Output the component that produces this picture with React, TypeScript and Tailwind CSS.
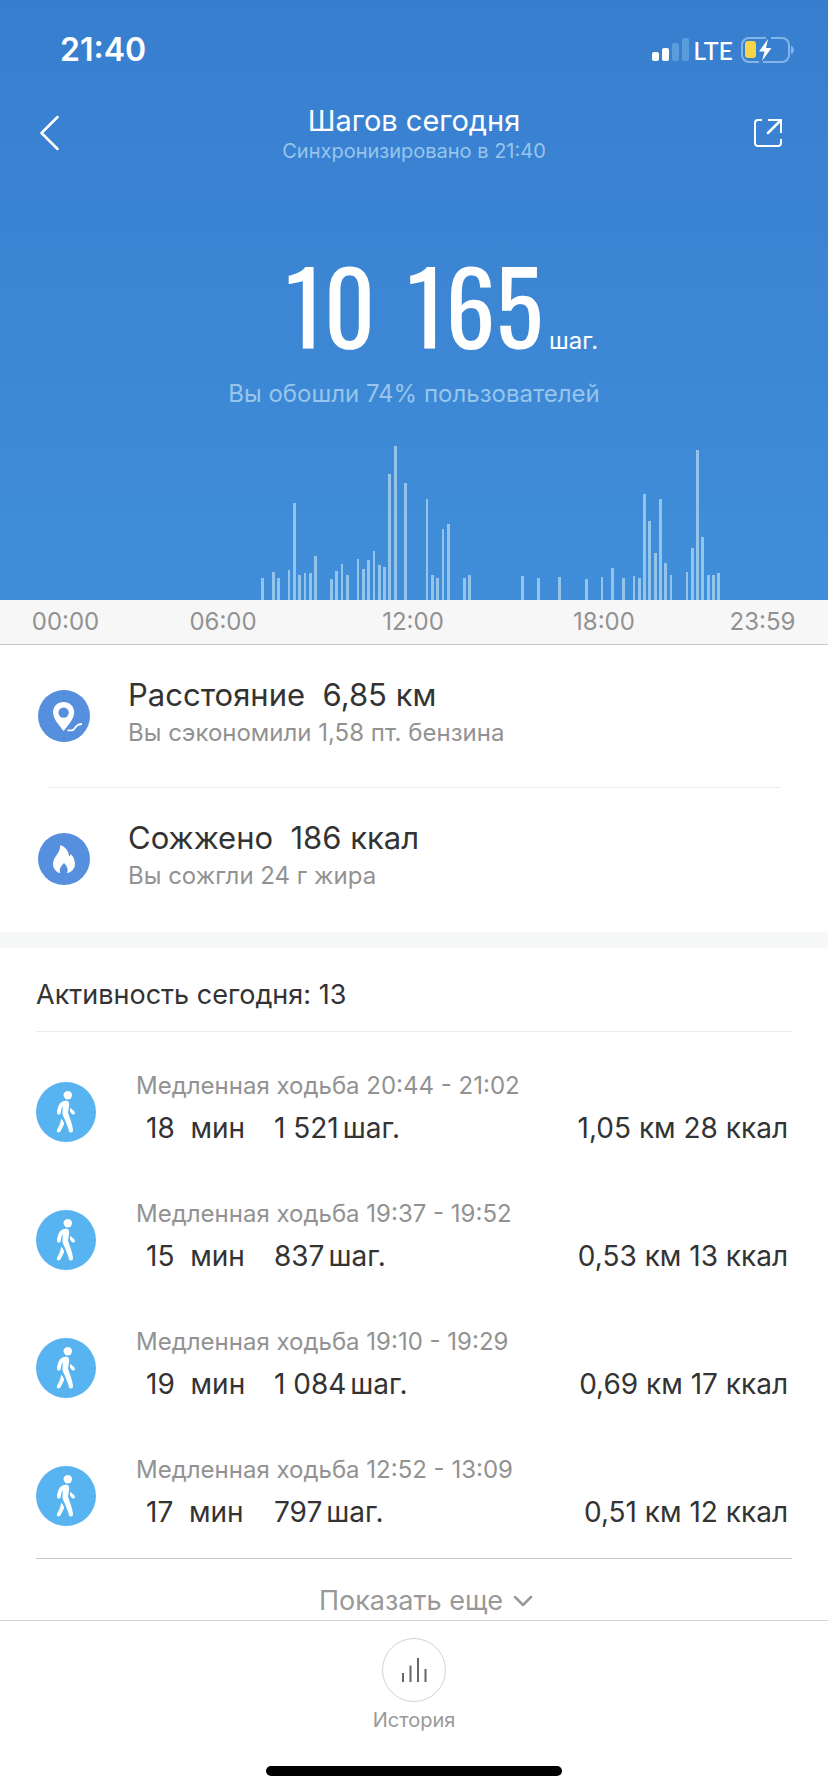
import type { ReactNode } from "react";

type Bar = [x: number, width: number, height: number];

type Activity = {
  time: string;
  minutes: number;
  steps: string;
  distance: string;
  calories: number;
};

const CHART_HEIGHT = 154;

const bars: Bar[] = [
  [261, 3, 22], [272, 3, 28], [277, 3, 22], [288, 2, 30], [293, 3, 97], [298, 3, 25],
  [304, 2, 27], [309, 3, 27], [314, 3, 44], [330, 3, 21], [335, 3, 29], [341, 2, 36],
  [346, 3, 25], [357, 2, 41], [362, 3, 31], [367, 3, 40], [373, 2, 49], [378, 3, 35],
  [383, 3, 33], [388, 3, 126], [394, 3, 154], [404, 3, 117], [426, 2, 101], [431, 3, 25],
  [436, 3, 22], [442, 2, 71], [447, 3, 76], [463, 3, 22], [468, 3, 25], [521, 3, 24],
  [537, 3, 22], [558, 3, 23], [585, 3, 21], [601, 2, 23], [611, 3, 32], [622, 3, 22],
  [633, 2, 24], [638, 3, 22], [643, 3, 106], [648, 3, 79], [654, 3, 47], [659, 3, 101],
  [664, 3, 37], [670, 2, 25], [686, 2, 28], [691, 3, 52], [696, 3, 150], [701, 3, 63],
  [707, 3, 25], [712, 3, 25], [717, 3, 27]
];

const hours = ["00:00", "06:00", "12:00", "18:00", "23:59"];

const activities: Activity[] = [
  { time: "20:44 - 21:02", minutes: 18, steps: "1 521", distance: "1,05", calories: 28 },
  { time: "19:37 - 19:52", minutes: 15, steps: "837", distance: "0,53", calories: 13 },
  { time: "19:10 - 19:29", minutes: 19, steps: "1 084", distance: "0,69", calories: 17 },
  { time: "12:52 - 13:09", minutes: 17, steps: "797", distance: "0,51", calories: 12 }
];

function StatusBar() {
  return (
    <div className="flex h-[100px] items-center justify-between pr-[34px] pl-[60px]">
      <span className="text-[32px] leading-10 font-semibold">21:40</span>
      <div className="flex items-center">
        <svg width="37" height="24" viewBox="0 0 37 24" fill="currentColor" aria-hidden="true">
          <rect x="0" y="14" width="7" height="9" rx="2" />
          <rect x="10" y="10" width="7" height="13" rx="2" />
          <rect x="20" y="5" width="7" height="18" rx="2" fill="#5a9cdc" />
          <rect x="30" y="0" width="7" height="23" rx="2" fill="#5a9cdc" />
        </svg>
        <span className="pr-2 pl-1 font-['Lato'] text-[25px] leading-8 font-medium">LTE</span>
        <svg width="53" height="26" viewBox="0 0 53 26" aria-hidden="true">
          <path
            d="M25 1H8a7 7 0 0 0-7 7v10a7 7 0 0 0 7 7h10M30 1h11a7 7 0 0 1 7 7v10a7 7 0 0 1-7 7H22"
            fill="none"
            stroke="#83b6e6"
            strokeWidth="2"
          />
          <path d="M50 9c4 1 4 7 0 8z" fill="#83b6e6" />
          <rect x="4" y="4" width="11" height="17" rx="3" fill="#f7d548" />
          <path d="M27 2 18 14.500h5.500L21 24l9.500-13H25z" fill="#fff" />
        </svg>
      </div>
    </div>
  );
}

function StepsChart() {
  return (
    <svg
      className="mt-9 block h-[154px] w-full"
      viewBox={`0 0 828 ${CHART_HEIGHT}`}
      preserveAspectRatio="none"
      fill="#94c4ea"
      shapeRendering="crispEdges"
      aria-hidden="true"
    >
      {bars.map(([x, width, height]) => (
        <rect key={x} x={x} y={CHART_HEIGHT - height} width={width} height={height} />
      ))}
    </svg>
  );
}

function PinIcon() {
  return (
    <svg className="size-[52px] shrink-0" viewBox="0 0 52 52" aria-hidden="true">
      <circle cx="26" cy="26" r="26" fill="#558fdd" />
      <path
        d="M25.500 12C19.300 12 15 16.600 15 22.300c0 6.700 6.500 13.400 10.700 18.700 4-5.300 10.500-12 10.500-18.700C36.200 16.600 31.700 12 25.500 12z"
        fill="#fff"
      />
      <circle cx="25.600" cy="22.600" r="5.200" fill="#558fdd" />
      <path
        d="M29.500 40.300h4c3 0 3-2.300 5-4.300 1.500-1.600 3-2 5.500-2"
        fill="none"
        stroke="#fff"
        strokeWidth="1.800"
      />
    </svg>
  );
}

function FlameIcon() {
  return (
    <svg className="size-[52px] shrink-0" viewBox="0 0 52 52" aria-hidden="true">
      <circle cx="26" cy="26" r="26" fill="#558fdd" />
      <path
        d="M22.300 12c4.200 1.500 8.500 5.300 8.700 11.300 1-.4 1.500-1.300 1.700-2.300 2.700 2.500 4.300 6.300 4.300 10 0 4.600-3.200 8-8 9.300 1.500-3.700.3-7-3-10.300-3.200 3.200-5.300 6.500-3.700 10.200C18 39 15 35.500 15 31c0-7.500 7.500-10.500 7.300-19z"
        fill="#fff"
      />
    </svg>
  );
}

function WalkIcon() {
  return (
    <svg className="size-[60px] shrink-0" viewBox="0 0 60 60" aria-hidden="true">
      <circle cx="30" cy="30" r="30" fill="#58b4f0" />
      <circle cx="31.800" cy="13.200" r="4.200" fill="#fff" />
      <path
        d="M27 19.300c2-1 4.700-.8 5.700.7.800 1.300.3 4-.2 7.200l-.5 3.300c1.800 5 4.500 12.500 5 17.500.2 3-3.200 3.300-4 1-1.500-5.500-3.500-10.500-5.700-14.500-1.200-2.200-.9-5.500-.3-9.700-1.200 1-1.700 2.500-2.300 6.200-.4 2.300-3.700 2.200-3.700-.3.200-5 2.200-9.600 6-11.400z"
        fill="#fff"
      />
      <path
        d="M25.300 36.500c1.300 1.700 2.200 3.300 2.900 5-1.200 3.200-2.700 6-4.200 8.200-1.500 1.700-3.800.3-3-1.700 2.300-4.500 3.800-8 4.300-11.500zM34.400 25.700c1.600 2.200 4.100 2.600 4.500 5 .2 2-2.200 2.400-3.200 1.100-1.100-1.300-1.900-2.500-1.700-3.700z"
        fill="#fff"
      />
    </svg>
  );
}

function StatRow({ icon, label, value, note }: { icon: ReactNode; label: string; value: string; note: string }) {
  return (
    <div className="flex h-[142px] items-center gap-[38px] px-[38px]">
      {icon}
      <div className="pb-[6px]">
        <p className="text-[31px] leading-10 whitespace-pre text-[#333]">
          {label}
          {"  "}
          {value}
        </p>
        <p className="text-2xl leading-9 text-[#929292]">{note}</p>
      </div>
    </div>
  );
}

function ActivityRow({ activity }: { activity: Activity }) {
  return (
    <li className="flex h-[124px] items-center gap-10">
      <WalkIcon />
      <div className="flex-1 pb-2">
        <p className="text-2xl leading-10 text-[#929292]">Медленная ходьба {activity.time}</p>
        <div className="flex text-[28px] leading-[44px] text-[#333]">
          <span className="w-[138px] pl-[10px] whitespace-pre">{activity.minutes}{"  "}мин</span>
          <span className="flex gap-1">
            <span>{activity.steps}</span>
            <span>шаг.</span>
          </span>
          <span className="ml-auto pr-1">
            {activity.distance} км {activity.calories} ккал
          </span>
        </div>
      </div>
    </li>
  );
}

export default function App() {
  return (
    <div className="flex min-h-screen flex-col bg-white font-['Inter',sans-serif]">
      <header className="bg-linear-to-b from-[#387ecf] to-[#408ed9] text-white">
        <StatusBar />
        <div className="flex h-[66px] items-center justify-between pr-[46px] pl-[39px]">
          <button type="button" aria-label="Назад" className="w-[35px]">
            <svg width="20" height="36" viewBox="0 0 20 36" fill="none" stroke="currentColor" strokeWidth="2.500" strokeLinecap="round" strokeLinejoin="round">
              <path d="M18.500 2 2.500 18l16 16" />
            </svg>
          </button>
          <div className="text-center">
            <h1 className="text-[29px] leading-9">Шагов сегодня</h1>
            <p className="text-xl leading-6 text-[#97c5ec]">Синхронизировано в 21:40</p>
          </div>
          <button type="button" aria-label="Поделиться" className="flex w-7 justify-end">
            <svg width="28" height="28" viewBox="0 0 28 28" fill="none" stroke="currentColor" strokeWidth="2">
              <path d="M8 1H4a3 3 0 0 0-3 3v20a3 3 0 0 0 3 3h20a3 3 0 0 0 3-3v-4M14 1h13v13" />
              <path d="M26.500 1.500 14 14" strokeWidth="2.500" strokeLinecap="round" />
            </svg>
          </button>
        </div>
        <div className="flex items-baseline justify-center pt-[86px] pl-14">
          <span className="flex gap-8 font-['Oswald','Roboto_Condensed','Liberation_Sans_Narrow','Roboto',sans-serif] text-[100px] leading-[104px] font-normal">
            <span>10</span>
            <span>165</span>
          </span>
          <span className="pl-[6px] text-2xl leading-8">шаг.</span>
        </div>
        <p className="mt-[21px] text-center text-2xl leading-8 text-[#97c5ec]">
          Вы обошли 74% пользователей
        </p>
        <StepsChart />
      </header>

      <div className="grid grid-cols-[131fr_184fr_196fr_186fr_131fr] border-b border-[#c8c8c8] bg-[#f7f7f7] text-center text-2xl leading-[44px] text-[#929292]">
        {hours.map((hour) => (
          <span key={hour}>{hour}</span>
        ))}
      </div>

      <main className="flex-1">
        <section className="border-b-16 border-[#f5f8f7] pb-[2px]">
          <StatRow icon={<PinIcon />} label="Расстояние" value="6,85 км" note="Вы сэкономили 1,58 пт. бензина" />
          <hr className="mx-12 border-[#ebebeb]" />
          <StatRow icon={<FlameIcon />} label="Сожжено" value="186 ккал" note="Вы сожгли 24 г жира" />
        </section>

        <section className="px-9">
          <h2 className="border-b border-[#ebebeb] pt-[27px] pb-4 text-[27px] leading-10 text-[#333]">
            Активность сегодня: 13
          </h2>
          <ul className="flex flex-col gap-1 border-b border-[#c8c8c8] pt-[18px]">
            {activities.map((activity) => (
              <ActivityRow key={activity.time} activity={activity} />
            ))}
          </ul>
          <button type="button" className="flex w-full items-center justify-center gap-[10px] pt-[23px] pl-6 text-[27px] leading-[38px] text-[#999]">
            Показать еще
            <svg width="20" height="12" viewBox="0 0 20 12" fill="none" stroke="currentColor" strokeWidth="2.500" strokeLinecap="round" strokeLinejoin="round" aria-hidden="true">
              <path d="m2 2 8 8 8-8" />
            </svg>
          </button>
        </section>
      </main>

      <nav className="sticky bottom-0 flex flex-col items-center border-t border-[#d2d2d2] bg-white pt-[17px] pb-4">
        <button type="button" className="flex flex-col items-center text-xl leading-9 text-[#999]">
          <span className="flex size-16 items-center justify-center rounded-full border border-[#d2d2d2]">
            <svg width="26" height="26" viewBox="0 0 26 26" stroke="#666" strokeWidth="2" aria-hidden="true">
              <path d="M2 16v9M9.500 8.500V25M17 1v24M24.500 12v13" />
            </svg>
          </span>
          История
        </button>
        <div className="mt-7 h-[10px] w-[296px] rounded-full bg-black" />
      </nav>
    </div>
  );
}
